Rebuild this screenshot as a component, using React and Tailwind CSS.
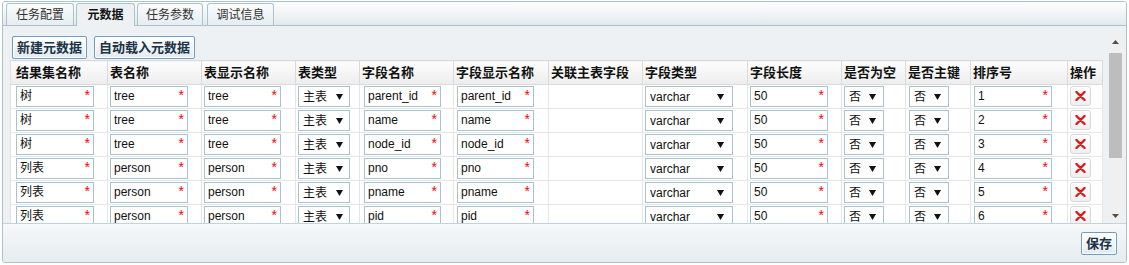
import React from 'react';

const cols = [97, 94, 94, 64, 94, 95, 94, 105, 94, 64, 65, 97, 35];

const headers = ['结果集名称', '表名称', '表显示名称', '表类型', '字段名称', '字段显示名称', '关联主表字段', '字段类型', '字段长度', '是否为空', '是否主键', '排序号', '操作'];

const rows = [
  ['树', 'tree', 'tree', 'parent_id', '1'],
  ['树', 'tree', 'tree', 'name', '2'],
  ['树', 'tree', 'tree', 'node_id', '3'],
  ['列表', 'person', 'person', 'pno', '4'],
  ['列表', 'person', 'person', 'pname', '5'],
  ['列表', 'person', 'person', 'pid', '6'],
];

const Arrow = () => (
  <svg width="7" height="6" viewBox="0 0 7 6" className="shrink-0">
    <polygon points="0,0 7,0 3.5,6" fill="#111" />
  </svg>
);

const Field = ({ value, w = 'w-[78px]' }) => (
  <div className={`relative ${w} h-[21px] border border-[#a9c3ce] bg-white pl-[3px] text-[12px] leading-[19px] text-[#111] whitespace-nowrap`}>
    {value}
    <span className="absolute right-[3px] top-[1px] text-[14px] leading-none text-[#ff0000]">*</span>
  </div>
);

const Select = ({ value, w, pr = 'pr-[6px]' }) => (
  <div className={`${w} h-[21px] border border-[#a9c3ce] bg-white pl-[4px] ${pr} flex items-center justify-between text-[12px] text-[#111]`}>
    <span>{value}</span>
    <Arrow />
  </div>
);

const DelBtn = () => (
  <div className="w-[21px] h-[20px] rounded-[3px] border border-[#d5dadd] bg-linear-to-b from-white to-[#efefef] flex items-center justify-center">
    <svg width="11" height="10" viewBox="0 0 11 10">
      <path d="M1.5 1 L9.5 9 M9.5 1 L1.5 9" stroke="#e01818" strokeWidth="2.4" strokeLinecap="round" />
    </svg>
  </div>
);

const Cell = ({ children, first }) => (
  <td className="h-[24px] p-0 align-top border-r border-b border-[#e6e6e6]">
    <div className={`pt-[1px] ${first ? 'pl-[5px]' : 'pl-[2px]'}`}>{children}</div>
  </td>
);

const Btn = ({ children }) => (
  <button className="h-[23px] px-[4px] border border-[#6e9dbf] rounded-[2px] bg-linear-to-b from-white to-[#e2eaf0] shadow-[inset_0_0_0_1px_#ffffff] text-[13px] font-bold leading-none text-[#1b3346]">
    {children}
  </button>
);

const tabs = [
  { label: '任务配置', w: 'w-[68px]', ml: 'ml-0' },
  { label: '元数据', w: 'w-[59px]', ml: 'ml-[2px]', active: true },
  { label: '任务参数', w: 'w-[66px]', ml: 'ml-[2px]' },
  { label: '调试信息', w: 'w-[67px]', ml: 'ml-[4px]' },
];

export default function App() {
  return (
    <div className="w-[1129px] h-[265px] bg-white pt-[1px] font-['Liberation_Sans','Noto_Sans_CJK_SC',sans-serif]">
      <div className="mx-[2px] h-[262px] border border-[#a9c2ce] rounded-[3px] bg-[#edf1f4] flex flex-col overflow-hidden">
        {/* tabs */}
        <div className="h-[24px] shrink-0 flex items-end pl-[3px] border-b border-[#a9c2ce] bg-linear-to-b from-white to-[#e2e9ed]">
          {tabs.map((t) => (
            <div
              key={t.label}
              className={`${t.w} ${t.ml} flex items-center justify-center rounded-t-[3px] border border-[#a9c2ce] text-[12px] ${
                t.active
                  ? 'h-[23px] -mb-px border-b-0 bg-[#edf1f4] font-bold text-[#111]'
                  : 'h-[22px] border-b-0 bg-linear-to-b from-[#fbfcfc] to-[#e6edf0] text-[#333]'
              }`}
            >
              {t.label}
            </div>
          ))}
        </div>

        {/* body */}
        <div className="flex-1 min-h-0 pt-[8px] flex">
          <div className="w-[1104px] pl-[7px] pt-[2px] overflow-hidden">
            <div className="flex gap-[7px] ml-[2px]">
              <Btn>新建元数据</Btn>
              <Btn>自动载入元数据</Btn>
            </div>
            <table className="mt-[1px] border-collapse table-fixed bg-white border-l border-[#e0e0e0]">
              <colgroup>
                {cols.map((w, i) => (
                  <col key={i} style={{ width: w }} />
                ))}
              </colgroup>
              <thead>
                <tr>
                  {headers.map((h, i) => (
                    <th
                      key={h}
                      className={`h-[24px] p-0 ${i === 0 ? 'pl-[5px]' : 'pl-[2px]'} text-left align-middle text-[13px] font-bold text-[#111] border-r border-b border-t border-[#dadada] bg-linear-to-b from-[#fdfdfd] to-[#ededed] whitespace-nowrap`}
                    >
                      {h}
                    </th>
                  ))}
                </tr>
              </thead>
              <tbody>
                {rows.map((r, i) => (
                  <tr key={i}>
                    <Cell first><Field value={r[0]} /></Cell>
                    <Cell><Field value={r[1]} /></Cell>
                    <Cell><Field value={r[2]} w="w-[77px]" /></Cell>
                    <Cell><Select value="主表" w="w-[52px]" /></Cell>
                    <Cell><div className="pl-[2px]"><Field value={r[3]} w="w-[77px]" /></div></Cell>
                    <Cell><div className="pl-[1px]"><Field value={r[3]} w="w-[77px]" /></div></Cell>
                    <Cell />
                    <Cell><Select value="varchar" w="w-[88px]" pr="pr-[8px]" /></Cell>
                    <Cell><Field value="50" /></Cell>
                    <Cell><Select value="否" w="w-[40px]" pr="pr-[7px]" /></Cell>
                    <Cell><div className="pl-[1px]"><Select value="否" w="w-[40px]" pr="pr-[7px]" /></div></Cell>
                    <Cell><div className="pl-[1px]"><Field value={r[4]} /></div></Cell>
                    <Cell><DelBtn /></Cell>
                  </tr>
                ))}
              </tbody>
            </table>
          </div>

          {/* scrollbar */}
          <div className="w-[17px] bg-[#f0f0f0] flex flex-col">
            <div className="h-[15px] flex items-center justify-center">
              <svg width="7" height="4" viewBox="0 0 7 4"><polygon points="0,4 7,4 3.5,0" fill="#505050" /></svg>
            </div>
            <div className="mt-[4px] mx-[2px] h-[105px] bg-[#bdbdbd]" />
            <div className="flex-1" />
            <div className="h-[15px] flex items-center justify-center">
              <svg width="7" height="4" viewBox="0 0 7 4"><polygon points="0,0 7,0 3.5,4" fill="#505050" /></svg>
            </div>
          </div>
        </div>

        {/* footer */}
        <div className="h-[39px] shrink-0 border-t border-[#c3d3db] bg-linear-to-b from-[#f6f8f9] to-[#e6ecef] flex items-center justify-end pr-[9px]">
          <Btn>保存</Btn>
        </div>
      </div>
    </div>
  );
}
